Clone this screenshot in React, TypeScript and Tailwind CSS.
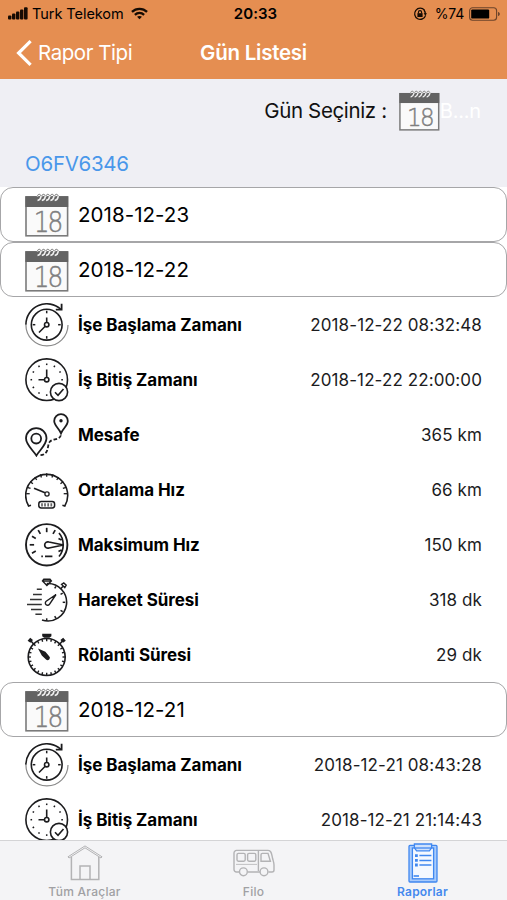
import React from "react";

const INK = "#1c1c1e";

type IconProps = { className?: string };

const Icon: React.FC<{ children: React.ReactNode }> = ({ children }) => (
  <svg viewBox="0 0 44 44" className="w-[44px] h-[44px] shrink-0" fill="none" stroke={INK} strokeWidth={1.6}>
    {children}
  </svg>
);

// Radial marks around a dial
const Ticks: React.FC<{ cx: number; cy: number; from: number; to: number; angles: number[]; width?: number }> = ({
  cx, cy, from, to, angles, width = 1.5,
}) => (
  <>
    {angles.map((a) => (
      <line key={a} x1={cx} y1={cy - from} x2={cx} y2={cy - to} strokeWidth={width} transform={`rotate(${a} ${cx} ${cy})`} />
    ))}
  </>
);

const CalendarIcon: React.FC<IconProps> = ({ className }) => (
  <svg viewBox="0 0 44 44" className={className} fill="none">
    <rect x="1" y="4" width="41.6" height="38.8" fill="#fafafa" stroke="#7b7b7b" strokeWidth="1.6" />
    <rect x="0.4" y="3.2" width="42.8" height="10.8" fill="#636363" />
    {[12.5, 16.8, 21.1, 25.4, 29.7].map((x) => (
      <g key={x}>
        <path d={`M${x} 3.5 C${x} 0.8 ${x + 4} 1 ${x + 3.4} 4 C${x + 3} 6 ${x + 1.6} 7.2 ${x} 7.6`} stroke="#f0f0f0" strokeWidth="1.5" />
        <path d={`M${x} 2.9 C${x + 0.4} 0.7 ${x + 3.2} 0.9 ${x + 3.4} 3`} stroke="#777" strokeWidth="1" />
      </g>
    ))}
    <text
      transform="translate(22.6 38.8) scale(0.9 1)"
      textAnchor="middle"
      fontFamily="'DejaVu Sans', sans-serif"
      fontWeight="200"
      fontSize="27.5"
      letterSpacing="-2"
      fill="#7f7f7f"
      stroke="#7f7f7f"
      strokeWidth="0.5"
    >
      18
    </text>
  </svg>
);

const StartIcon = () => (
  <Icon>
    <path d="M0.9 21.7 A20.8 20.8 0 0 1 36 6.5" />
    <path d="M0.9 21.7 A20.8 20.8 0 0 0 43 22" stroke="#8a8a8a" strokeWidth="1.2" />
    <path d="M36.6 0.8 V6.6 H30.8" strokeWidth="1.8" />
    <circle cx="21.7" cy="21.7" r="15.4" />
    <Ticks cx={21.7} cy={21.7} from={14} to={11.4} angles={[0, 90, 180, 270]} />
    <circle cx="21.7" cy="21.7" r="2.2" />
    <path d="M21.7 14.5 V19.5 M20.2 23.3 L14 29.5" />
  </Icon>
);

const EndIcon = () => (
  <Icon>
    <circle cx="21.7" cy="21.7" r="20.8" />
    <Ticks cx={21.7} cy={21.7} from={16.2} to={14.6} angles={[0, 30, 60, 90, 180, 210, 240, 270, 300, 330]} />
    <circle cx="21.7" cy="21.7" r="2.2" />
    <path d="M21.7 11.5 V19.5 M13.5 21.7 H19.5" />
    <circle cx="34" cy="34" r="8.6" fill="#fff" />
    <path d="M30 34.3 L33 37.3 L38.5 31" />
  </Icon>
);

const DistanceIcon = () => (
  <Icon>
    <path d="M11.4 42.6 C8 37 1 32 1 25.3 A10.2 10.2 0 0 1 21.5 25.3 C21.5 32 14.5 37 11.4 42.6 Z" strokeWidth="1.8" />
    <circle cx="11.2" cy="25.6" r="4.9" strokeWidth="1.8" />
    <path d="M36 20.3 C34 15.5 29.2 12.5 29.2 8 A6.8 6.8 0 0 1 42.8 8 C42.8 12.5 38 15.5 36 20.3 Z" strokeWidth="1.8" />
    <circle cx="36" cy="7.8" r="1.7" fill={INK} stroke="none" />
    <path d="M15.5 42.2 C25 41 21.5 32.5 25 28.5 C28 25.3 36 27.5 36 20.8" strokeDasharray="3.6 1.9" strokeWidth="1.8" />
  </Icon>
);

const AverageSpeedIcon = () => (
  <Icon>
    <path d="M6 37.3 L3.6 38 A21 21 0 1 1 39.8 38 L37.4 37.3" />
    <Ticks cx={21.7} cy={25.7} from={20.5} to={17} angles={[-90, -72, -54, -36, -18, 0, 18, 36, 54, 72, 90]} width={1.3} />
    <circle cx="22" cy="26" r="2.1" strokeWidth="1.3" />
    <path d="M9 20.2 L20 24.8" strokeWidth="1.7" />
    <rect x="13.8" y="33.6" width="15.8" height="6.4" rx="2.4" strokeWidth="1.5" />
    <path d="M17 35.2 v3.2 M20 35.2 v3.2 M23.2 35.2 v3.2 M26.3 35.2 v3.2" strokeWidth="1.7" stroke="#666" />
  </Icon>
);

const MaxSpeedIcon = () => (
  <Icon>
    <circle cx="21.7" cy="21.8" r="20.7" strokeWidth="1.9" />
    <Ticks cx={21.7} cy={21.8} from={17} to={12.6} angles={[-120, -90, -60, -30, 0, 30]} width={1.7} />
    <path d="M34 10 C39.6 16.5 39.6 27 34 33.5 M36.5 17 l-3 -1.5 M36.5 27 l-3 1.5" strokeWidth="1.7" />
    <path d="M38.5 22 L24 19 A3.2 3.2 0 1 0 24 25 Z" strokeWidth="1.7" />
    <path d="M16.3 33.4 h1.6 M20 33.4 h7.4" strokeWidth="1.7" />
  </Icon>
);

const MovingIcon = () => (
  <Icon>
    <path d="M21.7 5.6 A18.7 18.7 0 1 1 17 42" />
    <Ticks cx={21.7} cy={24.3} from={18.5} to={16} angles={[30, 60, 90, 120, 150, 180]} width={1.5} />
    <path d="M17.5 3 L18.8 1.2 H25 L26.4 3 L21.9 7.4 Z M17.5 3 H26.4" strokeWidth="1.4" />
    <path d="M35.6 11 L38 8.2 M36.6 6.4 L38.8 5 L41.2 7.2 L39.8 9.6 Z" strokeWidth="1.4" />
    <path d="M31 16.5 L24.6 26.2 A2.3 2.3 0 1 1 21.2 23.2 Z" strokeWidth="1.4" />
    <path d="M11.8 11.3 h5 M8 16.4 h8.8 M5 21.4 h11.8 M2 26.4 h14.8 M6 31.4 h10.8 M10.4 36.3 h6.4" strokeWidth="1.5" stroke="#333" />
  </Icon>
);

const IdleIcon = () => (
  <Icon>
    <circle cx="21.7" cy="24" r="18.5" strokeWidth="1.6" />
    <Ticks cx={21.7} cy={24} from={18.5} to={15.8} angles={Array.from({ length: 24 }, (_, i) => i * 15)} width={1.4} />
    <path d="M17.2 0.8 H26.4 V3.2 L24.4 4.8 H19.2 L17.2 3.2 Z" fill={INK} stroke="none" />
    <path d="M2.6 7.8 L5.2 4.8 L8 7 L5.4 9.8 Z M40.8 7.8 L38.2 4.8 L35.4 7 L38 9.8 Z" fill={INK} stroke="none" />
    <path d="M6 8 L9 11.4 M37.4 8 L34.4 11.4" strokeWidth="1.5" />
    <path d="M13 15.4 L20.4 18.8 L24.2 23.2 A2.2 2.2 0 0 1 21 26.4 L16.8 22.6 Z" fill={INK} stroke="none" />
  </Icon>
);

const HouseIcon = () => (
  <svg viewBox="0 0 36 36" className="w-[36px] h-[36px]" fill="none" stroke="#b3b3b5" strokeWidth="1.5">
    <path d="M2 13 L1 11.8 L18 0.9 L35 11.8 L34 13 L18 2.8 Z" strokeWidth="1" />
    <path d="M4.4 12 V34.4 H31.8 V12" />
    <path d="M13 34.4 V21 H23 V34.4" />
  </svg>
);

const BusIcon = () => (
  <svg viewBox="0 0 42 28" className="w-[42px] h-[28px]" fill="none" stroke="#b3b3b5" strokeWidth="1.4">
    <path d="M6 23 H3.4 A2.4 2.4 0 0 1 1 20.6 V4 A2.6 2.6 0 0 1 3.6 1.4 H35 C38.4 1.4 38.6 5 39.5 9 C40.2 12 41 13.5 41 16 V21 A2 2 0 0 1 39 23 H35.4 M27 23 H14.6" />
    <rect x="4" y="4.4" width="8.2" height="7.8" rx="1.4" />
    <rect x="14.6" y="4.4" width="8.2" height="7.8" rx="1.4" />
    <path d="M25.4 1.4 V22 M28 12.2 V5.8 A1.4 1.4 0 0 1 29.4 4.4 H35 L37.4 12.2 Z" />
    <path d="M3 15.4 H24" strokeWidth="0.8" />
    <circle cx="10.4" cy="22.8" r="3.9" fill="#f4f4f6" />
    <circle cx="31" cy="22.8" r="3.9" fill="#f4f4f6" />
  </svg>
);

const ClipboardIcon = () => (
  <svg viewBox="0 0 30 40" className="w-[30px] h-[40px]" fill="none" stroke="#3f87f0" strokeWidth="1.3">
    <rect x="1" y="2.4" width="28" height="36.6" rx="1" fill="#a9cbfb" />
    <rect x="4.4" y="5" width="21.2" height="30.8" fill="#f4f8ff" />
    <path d="M6.4 1 H23.6 V4.8 L21.4 7.8 H8.6 L6.4 4.8 Z" fill="#cfe1fc" />
    <path d="M7 5 H23" />
    <path d="M11.4 12.6 H23.4 M11.4 17.4 H23.4 M11.4 22 H23.4" strokeWidth="1.5" />
    <path d="M7 12.6 h2.8 M7 17.4 h2.8 M7 22 h2.8" strokeWidth="2.8" />
    <path d="M5.6 33 h5.4" strokeWidth="1.6" />
  </svg>
);

const DateCard: React.FC<{ date: string }> = ({ date }) => (
  <div className="h-[55px] shrink-0 border border-[#a6a6a8] rounded-[13px] bg-white flex items-center pl-[24px]">
    <CalendarIcon className="w-[44px] h-[44px] shrink-0" />
    <span className="ml-[9px] pt-[2px] text-[20.5px] leading-none tracking-[0.05px] text-black">{date}</span>
  </div>
);

const DetailRow: React.FC<{ icon: React.ReactNode; label: string; value: string }> = ({ icon, label, value }) => (
  <div className="h-[55px] shrink-0 flex items-center px-[25px]">
    {icon}
    <span className="ml-[9px] pt-[2px] text-[17px] leading-none font-bold tracking-[-0.05px] text-black">{label}</span>
    <span className="ml-auto pt-[2px] text-[17px] leading-none tracking-[0.1px] text-[#1c1c1e]">{value}</span>
  </div>
);

const StatusBar = () => (
  <div className="relative h-[27px] flex items-center justify-between pl-[8px] pr-[6px] text-black">
    <div className="flex items-center">
      <svg viewBox="0 0 20 13" className="w-[20px] h-[13px]" fill="#160b03">
        <rect x="0" y="8.5" width="3.4" height="4" rx="1" />
        <rect x="4" y="6.5" width="3.4" height="6" rx="1" />
        <rect x="8" y="4.5" width="3.4" height="8" rx="1" />
        <rect x="12" y="2.4" width="3.4" height="10.1" rx="1" />
        <rect x="16" y="0.2" width="3.6" height="12.3" rx="1" />
      </svg>
      <span className="ml-[4px] pt-[2px] text-[14.5px] leading-none tracking-[-0.05px]">Turk Telekom</span>
      <svg viewBox="0 0 18 13" className="ml-[7px] w-[17px] h-[13px]" fill="none" stroke="#160b03" strokeWidth="2.4">
        <path d="M1 4.8 C5.5 0.4 12.5 0.4 17 4.8" />
        <path d="M4.1 8 C7 5.3 11 5.3 13.9 8" />
        <path d="M9 12.6 L6.4 10 C7.8 8.7 10.2 8.7 11.6 10 Z" fill="#160b03" stroke="none" />
      </svg>
    </div>
    <span className="absolute inset-x-0 text-center pl-[4px] text-[15px] leading-none font-semibold tracking-[0.05px]">20:33</span>
    <div className="flex items-center">
      <svg viewBox="0 0 14 14" className="w-[14px] h-[14px]" fill="none" stroke="#160b03" strokeWidth="1.3">
        <path d="M11.5 3.2 A5.6 5.6 0 1 0 12.6 8.4" />
        <path d="M10.6 6.2 H14 L12.4 8.8 Z" fill="#160b03" stroke="none" />
        <path d="M12.2 7 A5.6 5.6 0 0 0 11 3" />
        <rect x="4.4" y="6.2" width="5.2" height="3.8" fill="#160b03" stroke="none" />
        <path d="M5.4 6.4 V5.2 A1.6 1.6 0 0 1 8.6 5.2 V6.4" strokeWidth="1.1" />
      </svg>
      <span className="ml-[8px] text-[14px] leading-none tracking-[-0.2px]">%74</span>
      <svg viewBox="0 0 32 14" className="ml-[5px] w-[32px] h-[14px]" fill="none">
        <rect x="0.6" y="0.7" width="27" height="12.6" rx="3" stroke="#6b432a" strokeWidth="1.1" />
        <rect x="2.2" y="2.4" width="18" height="9.2" rx="1.2" fill="#000" />
        <path d="M29 5 C31.4 5.4 31.4 8.6 29 9 Z" fill="#6b432a" />
      </svg>
    </div>
  </div>
);

const TABS = [
  { label: "Tüm Araçlar", icon: <HouseIcon />, active: false },
  { label: "Filo", icon: <BusIcon />, active: false },
  { label: "Raporlar", icon: <ClipboardIcon />, active: true },
];

const App: React.FC = () => {
  return (
    <div className="w-[507px] h-[900px] flex flex-col overflow-hidden bg-white font-['Inter',sans-serif]">
      <header className="h-[79px] shrink-0 bg-[#e58e51]">
        <StatusBar />
        <div className="relative h-[52px] flex items-center pl-[16px] text-white">
          <svg viewBox="0 0 16 26" className="w-[16px] h-[26px]" fill="none" stroke="#fff" strokeWidth="3.2">
            <path d="M14.6 1.2 L2.6 13 L14.6 24.8" />
          </svg>
          <span className="ml-[6px] text-[20.5px] leading-none tracking-[-0.45px]">Rapor Tipi</span>
          <span className="absolute inset-x-0 text-center text-[20.5px] leading-none font-semibold tracking-[-0.25px]">Gün Listesi</span>
        </div>
      </header>

      <section className="h-[108px] shrink-0 bg-[#efeff4]">
        <div className="h-[64px] flex items-center justify-end pr-[26px]">
          <span className="text-[20.5px] leading-none tracking-[-0.35px] text-[#111]">Gün Seçiniz :</span>
          <CalendarIcon className="ml-[12px] -mt-[2px] w-[41px] h-[41px]" />
          <span className="text-[20px] leading-none tracking-[-0.2px] text-white">B...n</span>
        </div>
        <div className="h-[42px] flex items-center pl-[25px]">
          <span className="text-[20.5px] leading-none tracking-[-0.25px] text-[#4997ea]">O6FV6346</span>
        </div>
      </section>

      <main className="flex-1 min-h-0 overflow-hidden flex flex-col">
        <DateCard date="2018-12-23" />
        <DateCard date="2018-12-22" />
        <DetailRow icon={<StartIcon />} label="İşe Başlama Zamanı" value="2018-12-22 08:32:48" />
        <DetailRow icon={<EndIcon />} label="İş Bitiş Zamanı" value="2018-12-22 22:00:00" />
        <DetailRow icon={<DistanceIcon />} label="Mesafe" value="365 km" />
        <DetailRow icon={<AverageSpeedIcon />} label="Ortalama Hız" value="66 km" />
        <DetailRow icon={<MaxSpeedIcon />} label="Maksimum Hız" value="150 km" />
        <DetailRow icon={<MovingIcon />} label="Hareket Süresi" value="318 dk" />
        <DetailRow icon={<IdleIcon />} label="Rölanti Süresi" value="29 dk" />
        <DateCard date="2018-12-21" />
        <DetailRow icon={<StartIcon />} label="İşe Başlama Zamanı" value="2018-12-21 08:43:28" />
        <DetailRow icon={<EndIcon />} label="İş Bitiş Zamanı" value="2018-12-21 21:14:43" />
      </main>

      <nav className="h-[60px] shrink-0 grid grid-cols-3 bg-[#f4f4f6] border-t border-[#d4d4d6]">
        {TABS.map((tab) => (
          <div key={tab.label} className="flex flex-col items-center">
            <div className="h-[44px] flex items-center">{tab.icon}</div>
            <span
              className={
                tab.active
                  ? "text-[12px] leading-[13px] font-semibold tracking-[0.2px] text-[#4489ee]"
                  : "text-[12px] leading-[13px] font-medium tracking-[0.25px] text-[#a0a0a3]"
              }
            >
              {tab.label}
            </span>
          </div>
        ))}
      </nav>
    </div>
  );
};

export default App;
